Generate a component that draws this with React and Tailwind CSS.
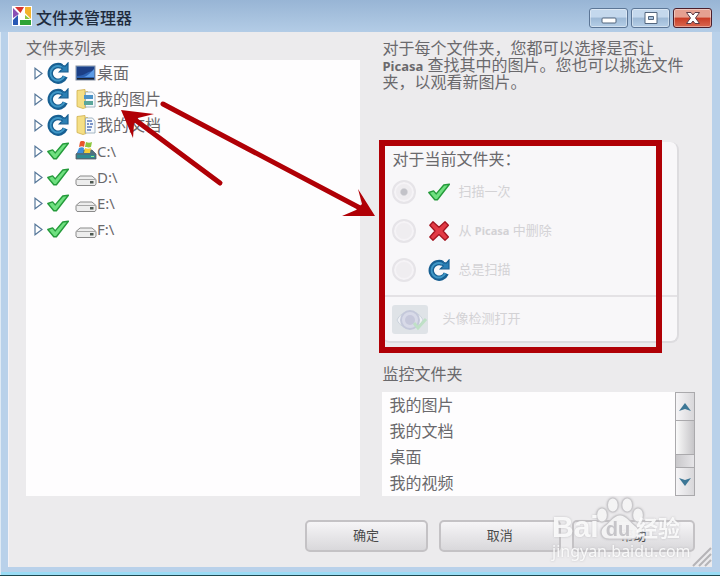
import React, { useState } from 'react'

const folders = [
    { name: '桌面', icon: 'desktop', state: 'always' },
    { name: '我的图片', icon: 'pictures', state: 'always' },
    { name: '我的文档', icon: 'documents', state: 'always' },
    { name: 'C:\\', icon: 'system', state: 'once' },
    { name: 'D:\\', icon: 'drive', state: 'once' },
    { name: 'E:\\', icon: 'drive', state: 'once' },
    { name: 'F:\\', icon: 'drive', state: 'once' },
]

const watched = ['我的图片', '我的文档', '桌面', '我的视频']

const PicasaLogo = () => (
    <svg className="ml-1 w-5 h-5 shrink-0" viewBox="0 0 20 20">
        <rect width="20" height="20" fill="#fff" />
        <path d="M1 2l6 6-6 4z" fill="#8a4fb5" />
        <path d="M3 1h9L8.500 7z" fill="#d8332e" />
        <path d="M13 1h6v12l-6-6z" fill="#f3b32c" />
        <path d="M1 14l5-5v10H1z" fill="#2858b5" />
        <path d="M8 14h11v5H8z" fill="#2ea336" />
        <path d="M13 9l5 4h-5z" fill="#8cc63f" />
    </svg>
)

const RefreshIcon = () => (
    <svg className="w-[22px] h-[22px] shrink-0" viewBox="0 0 22 22">
        <path d="M18.200 14.500A7.800 7.800 0 1 1 14.800 4.500" fill="none" stroke="#175f92" strokeWidth="5.400" />
        <path d="M21 1v8.800h-8.600l2.800-2.800-2.400-2.200 3.200-1.200 2.200.6z" fill="#2a7fb5" stroke="#175f92" strokeWidth="1.200" />
        <path d="M17.500 14.200A7.300 7.300 0 1 1 14.600 5" fill="none" stroke="#3f97c7" strokeWidth="2" />
    </svg>
)

const CheckIcon = () => (
    <svg className="w-[22px] h-[22px] shrink-0" viewBox="0 0 22 22">
        <path d="M.8 11.500l4.800-1.600 2.600 3L15.800 4l5.600-.8L9.400 18.800H6.800z" fill="#6fe080" stroke="#249a3a" strokeWidth="1.400" strokeLinejoin="round" />
    </svg>
)

const CrossIcon = () => (
    <svg className="w-[22px] h-[22px] shrink-0" viewBox="0 0 22 22">
        <path d="M5 1.800l6 5.400 6-5.400 3.400 3.400-5.200 5.800 5.200 6-3.400 3.200-6-5.600-6 5.600L1.800 17 7 11 1.800 5.200z" fill="#e23a45" stroke="#a3141f" strokeWidth="1.300" strokeLinejoin="round" />
    </svg>
)

const FolderIcon = ({ type }) => {
    if (type === 'desktop') {
        return (
            <svg className="w-[22px] h-5 shrink-0" viewBox="0 0 22 20">
                <rect x="1" y="3" width="19" height="14" fill="#2d62b4" stroke="#87919f" />
                <path d="M2 4h17v4c-7 0-9 5-17 5z" fill="#1c3f86" />
                <path d="M9 14c4-1 7-5 10-8v8z" fill="#5b9be6" />
                <path d="M2 15h17v1.500H2z" fill="#1b2432" />
            </svg>
        )
    }
    if (type === 'pictures' || type === 'documents') {
        return (
            <svg className="w-[22px] h-5 shrink-0" viewBox="0 0 22 20">
                <path d="M2 1.500l8-1 1 18-3 1-6-2z" fill="#f5df86" stroke="#cfae4c" strokeWidth=".8" />
                <path d="M9 2h4v16H9z" fill="#e8cb68" />
                <path d="M10.500 3h7l2.500 3v12h-9.500z" fill="#f5f9fc" stroke="#8fa5b5" strokeWidth=".8" />
                {type === 'pictures' ? (
                    <g>
                        <path d="M9 6h9v4H9z" fill="#4c93c8" />
                        <path d="M9 12h9v4H9z" fill="#5aa69b" />
                    </g>
                ) : (
                    <path d="M12 6h5M12 9h2M15 9h3M12 12h5M12 15h4" stroke="#5576b8" strokeWidth="1.300" />
                )}
            </svg>
        )
    }
    return (
        <svg className="w-[22px] h-5 shrink-0" viewBox="0 0 22 20">
            {type === 'system' ? (
                <g>
                    <path d="M1 13l4-4h12l4 4v5H1z" fill="#4c7280" stroke="#54606a" strokeWidth=".8" />
                    <path d="M2 14h18v3H2z" fill="#2f8a92" />
                    <path d="M5 1c2-2 4-1 5 0L9 6C8 5 6 5 4 6z" fill="#e8562c" />
                    <path d="M11 1c2 1 4 1 6 0l-1 5c-2 1-5 0-6 0z" fill="#8cc63f" />
                    <path d="M4 7c2-1 4-1 5 0l-1 5H2z" fill="#3f8fdc" />
                    <path d="M10 7c2 1 4 1 6 0l-1 5H9z" fill="#f8cf38" />
                    <path d="M16 15.500h3" stroke="#8ff08d" />
                </g>
            ) : (
                <g>
                    <path d="M1 12.500L5 9h12l4 3.500V17l-1 1.500H2L1 17z" fill="#ededed" stroke="#8b8b8b" />
                    <path d="M1.500 12.500h19" stroke="#a7a7a7" />
                    <path d="M15 14h3.500v2.500H15z" fill="#4f5a53" />
                </g>
            )}
        </svg>
    )
}

const CaptionButton = ({ label, danger, children }) => (
    <button
        aria-label={label}
        className={`w-[39px] h-5 rounded-[3px] border flex items-center justify-center ${danger
            ? 'border-[#4b1f2c] bg-linear-to-b from-[#e5a091] from-45% via-[#c93b25] via-50% to-[#d9674f]'
            : 'border-[#5c7696] bg-linear-to-b from-[#c4d8ed] from-45% via-[#9db9d6] via-50% to-[#b5cee7]'} shadow-[inset_0_0_0_1px_rgba(255,255,255,0.4)]`}
    >
        <svg width="18" height="14" viewBox="0 0 18 14">{children}</svg>
    </button>
)

const ScanOption = ({ value, scan, setScan, icon, children }) => (
    <label className="flex items-center h-[39px] text-[13px] text-[#d3d2d5]">
        <input
            type="radio"
            name="scan"
            value={value}
            checked={scan === value}
            onChange={() => setScan(value)}
            disabled
            className="appearance-none w-6 h-6 rounded-full border-2 border-[#e6e4e8] bg-[#efedf0] shadow-[inset_0_0_0_2px_#f5f3f6] checked:bg-radial checked:from-[#c2c2c8] checked:from-20% checked:to-[#eeecef] checked:to-30%"
        />
        <span className="ml-3 mr-2">{icon}</span>
        <span>{children}</span>
    </label>
)

const DialogButton = ({ children }) => (
    <button className="flex-1 h-8 rounded-[5px] border-2 border-[#c4c2c5] bg-linear-to-b from-[#f6f5f7] to-[#d9d8db] text-[13px] text-[#4a4a4a]">
        {children}
    </button>
)

const Watermark = () => (
    <div className="absolute right-7 bottom-3 w-[140px] h-[66px] pointer-events-none text-white/85 font-bold drop-shadow-[0_0_1px_#bbbabd]">
        <svg className="absolute left-11 top-0" width="48" height="46" viewBox="0 0 40 46" preserveAspectRatio="none">
            <g fill="#fff" fillOpacity=".8" stroke="#c9c8cb" strokeWidth="1">
                <ellipse cx="5" cy="18" rx="4.500" ry="7" />
                <ellipse cx="14" cy="8" rx="4.500" ry="7" />
                <ellipse cx="26" cy="8" rx="4.500" ry="7" />
                <ellipse cx="35" cy="18" rx="4.500" ry="7" />
                <path d="M20 18c6 0 8 7 13 11 5 5 3 13-4 13-5 0-13 0-18 0-7 0-9-8-4-13 5-4 7-11 13-11z" />
            </g>
        </svg>
        <div className="relative flex items-center pt-4 leading-7">
            <span className="w-12 text-3xl leading-7 font-['Liberation_Sans',sans-serif]">Bai</span>
            <span className="w-9 pt-1 text-center text-xl leading-6 text-[#c6c5c9] font-['Liberation_Sans',sans-serif]">du</span>
            <span className="text-[22px]">经验</span>
        </div>
        <p className="text-base leading-5 font-normal whitespace-nowrap">jingyan.baidu.com</p>
    </div>
)

const App = () => {
    const [scan, setScan] = useState('once')

    return (
        <div className="relative min-h-screen flex flex-col px-2 pb-2 border-b-2 border-b-[#1d4850] bg-[#b9d1ea] shadow-[inset_1px_0_0_#dfeaf5,inset_0_-3px_0_#9adcf5] font-['Noto_Sans','Noto_Sans_CJK_SC',sans-serif] text-base text-[#6a696c]">
            <header className="-mx-2 px-2 h-8 flex items-center bg-linear-to-b from-[#98b5d5] to-[#b3cce6]">
                <PicasaLogo />
                <h1 className="flex-1 ml-1 pt-1 text-[#1e2b3d] font-medium">文件夹管理器</h1>
                <div className="flex gap-[3px] pt-1">
                    <CaptionButton label="最小化">
                        <rect x="2" y="7" width="14" height="5" rx="1" fill="#fff" stroke="#53667e" />
                    </CaptionButton>
                    <CaptionButton label="最大化">
                        <path d="M3 1.500h12v11H3z" fill="#fff" stroke="#53667e" />
                        <path d="M6.500 5.500h5v3h-5z" fill="#a9c3df" stroke="#53667e" />
                    </CaptionButton>
                    <CaptionButton label="关闭" danger>
                        <path d="M2.500 1.500h4.500l2 2.500 2-2.500h4.500L11.500 7l4 5.500H11L9 10l-2 2.500H2.500l4-5.500z" fill="#fff" stroke="#5b3a45" />
                    </CaptionButton>
                </div>
            </header>

            <main className="relative flex-1 flex flex-col px-[17px] pb-[15px] bg-[#ecebed] border-l border-l-[#f4f2f7]">
                <div className="flex-1 grid grid-cols-[335fr_313fr] gap-[22px]">
                    <section className="flex flex-col pt-1">
                        <h2 className="leading-6">文件夹列表</h2>
                        <ul className="flex-1 bg-[#fefdfe]">
                            {folders.map((folder) => (
                                <li key={folder.name} className="flex items-center h-[26px] pl-2">
                                    <button aria-label={'展开 ' + folder.name} className="w-[13px]">
                                        <svg width="9" height="13" viewBox="0 0 9 13">
                                            <path d="M1 1.200v10.600l7-5.300z" fill="#fff" stroke="#57789a" strokeWidth="1.200" />
                                        </svg>
                                    </button>
                                    {folder.state === 'always' ? <RefreshIcon /> : <CheckIcon />}
                                    <span className="ml-[6px]"><FolderIcon type={folder.icon} /></span>
                                    <span className={folder.icon === 'drive' || folder.icon === 'system' ? 'text-[15px]' : ''}>{folder.name}</span>
                                </li>
                            ))}
                        </ul>
                    </section>

                    <section className="flex flex-col">
                        <p className="pt-2 h-[110px] leading-[17px]">
                            对于每个文件夹，您都可以选择是否让
                            <br />
                            <strong className="text-[13px] leading-none">Picasa</strong> 查找其中的图片。您也可以挑选文件夹，以观看新图片。
                        </p>

                        <div className="mr-4 rounded-lg bg-[#f8f7f9] border-r-2 border-b-2 border-[#dddcdf]">
                            <fieldset className="pl-[10px] h-[153px]">
                                <legend className="pt-1 leading-[26px]">对于当前文件夹：</legend>
                                <ScanOption value="once" scan={scan} setScan={setScan} icon={<CheckIcon />}>扫描一次</ScanOption>
                                <ScanOption value="remove" scan={scan} setScan={setScan} icon={<CrossIcon />}>
                                    从 <b className="text-[11px]">Picasa</b> 中删除
                                </ScanOption>
                                <ScanOption value="always" scan={scan} setScan={setScan} icon={<RefreshIcon />}>总是扫描</ScanOption>
                            </fieldset>
                            <button disabled className="w-full h-[46px] pl-[10px] flex items-center gap-[14px] border-t-2 border-[#e4e2e5] text-[13px] text-[#d3d2d5]">
                                <svg width="36" height="29" viewBox="0 0 36 29">
                                    <rect width="36" height="29" rx="3" fill="#dfe3e7" />
                                    <path d="M5 15C10 4 26 4 31 15 26 26 10 26 5 15z" fill="#eef0f4" stroke="#cbd3dc" />
                                    <circle cx="18" cy="15" r="9" fill="#d8dae8" stroke="#c4c8da" strokeWidth="2" />
                                    <circle cx="18" cy="15" r="5" fill="#c6c8db" />
                                    <path d="M22 18l4 5 8-9" fill="none" stroke="#bfe0c6" strokeWidth="3" />
                                </svg>
                                头像检测打开
                            </button>
                        </div>

                        <h2 className="pt-[19px] pb-[6px] leading-6">监控文件夹</h2>
                        <div className="flex-1 flex bg-[#fefdfe]">
                            <ul className="flex-1 pl-[7px]">
                                {watched.map((name) => (
                                    <li key={name} className="h-[26px] leading-[26px]">{name}</li>
                                ))}
                            </ul>
                            <div className="w-5 flex flex-col border border-[#aaa9ac] bg-linear-to-r from-[#c9c8cb] to-[#e6e5e8]">
                                <button aria-label="向上滚动" className="h-7 border-b border-[#aaa9ac] bg-linear-to-r from-[#f6f5f7] to-[#d8d7da] flex items-center justify-center">
                                    <svg width="12" height="8" viewBox="0 0 12 8"><path d="M0 8L6 0l6 8-6-2z" fill="#3d7796" /></svg>
                                </button>
                                <div className="h-[34px] border-b border-[#aaa9ac] bg-linear-to-r from-[#fafafa] to-[#c6c5c8]" />
                                <div className="flex-1" />
                                <button aria-label="向下滚动" className="h-7 border-t border-[#aaa9ac] bg-linear-to-r from-[#f6f5f7] to-[#d8d7da] flex items-center justify-center">
                                    <svg width="12" height="8" viewBox="0 0 12 8"><path d="M0 0l6 8 6-8-6 2z" fill="#3d7796" /></svg>
                                </button>
                            </div>
                        </div>
                    </section>
                </div>

                <footer className="mt-6 ml-auto w-7/12 flex gap-[11px]">
                    <DialogButton>确定</DialogButton>
                    <DialogButton>取消</DialogButton>
                    <DialogButton>帮助</DialogButton>
                </footer>

                <svg className="absolute right-0 bottom-0" width="20" height="20" viewBox="0 0 20 20">
                    <path d="M1 19L19 1M7 19L19 7M13 19l6-6" stroke="#b5b4b7" strokeWidth="2" />
                </svg>
            </main>

            <Watermark />

            {/* red callout box and arrows */}
            <svg className="absolute left-0 top-0 pointer-events-none" width="720" height="576" viewBox="0 0 720 576">
                <rect x="382" y="143" width="277" height="207" fill="none" stroke="#b00006" strokeWidth="6" />
                <g stroke="#b00006" strokeWidth="5" strokeLinecap="round">
                    <path d="M163 104L360 208" />
                    <path d="M220 183L134 119" />
                </g>
                <path d="M375 216l-33 0 14-6 6-6-4-15z" fill="#b00006" />
                <path d="M121 110l33 4-16 4-4 6-1 14z" fill="#b00006" />
            </svg>
        </div>
    )
}

export default App
